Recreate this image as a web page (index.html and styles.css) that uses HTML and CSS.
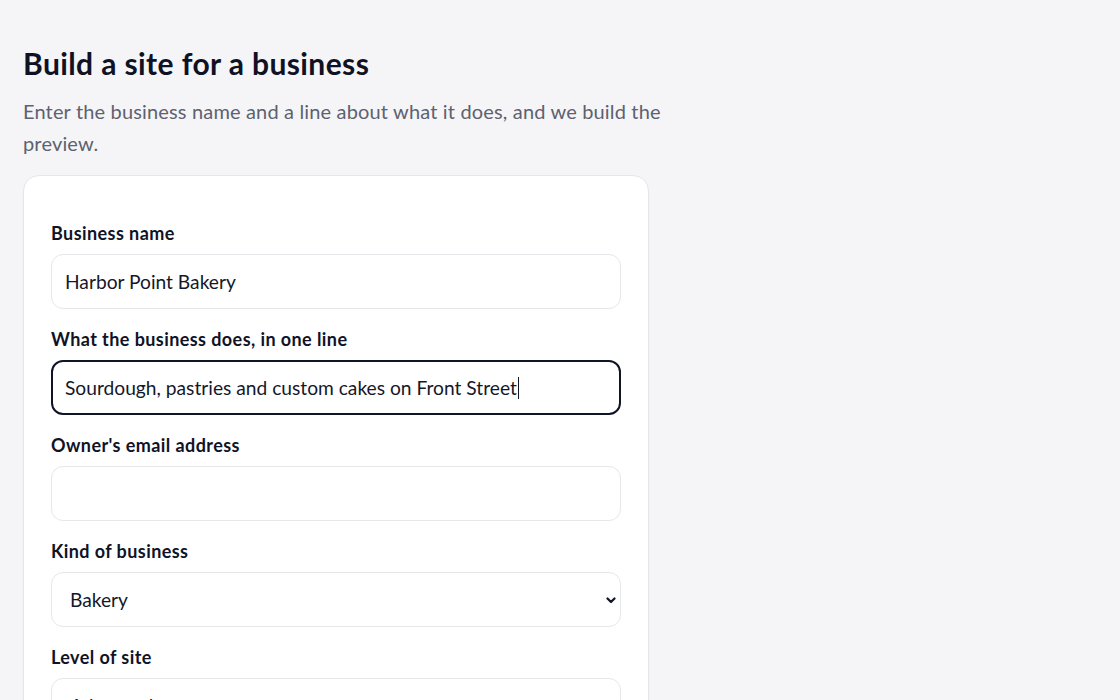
FILE: index.html
```html
<!DOCTYPE html>
<html lang="en">
<head>
<meta charset="utf-8">
<title>Build a site for a business</title>
<link rel="stylesheet" href="styles.css">
</head>
<body>
<main class="page">
  <h1 class="title">Build a site for a business</h1>
  <p class="intro">Enter the business name and a line about what it does, and we build the preview.</p>
  <form class="card">
    <div class="field">
      <label class="label" for="name">Business name</label>
      <input class="control" id="name" type="text" value="Harbor Point Bakery">
    </div>
    <div class="field">
      <label class="label" for="line">What the business does, in one line</label>
      <div class="control control--focus" id="line"><span>Sourdough, pastries and custom cakes on Front Street</span><span class="caret"></span></div>
    </div>
    <div class="field">
      <label class="label" for="email">Owner's email address</label>
      <input class="control" id="email" type="email" value="">
    </div>
    <div class="field">
      <label class="label" for="kind">Kind of business</label>
      <div class="select-wrap">
        <select class="control control--select" id="kind">
          <option selected>Bakery</option>
          <option>Café</option>
          <option>Restaurant</option>
          <option>Shop</option>
        </select>
        <svg class="chevron" viewBox="0 0 10 7" width="10" height="7" aria-hidden="true"><path d="M1.5 1.5 L5 5 L8.5 1.5" fill="none" stroke="#111426" stroke-width="2.2" stroke-linecap="round" stroke-linejoin="round"/></svg>
      </div>
    </div>
    <div class="field">
      <label class="label" for="level">Level of site</label>
      <div class="select-wrap">
        <select class="control control--select" id="level">
          <option selected>Advanced</option>
          <option>Basic</option>
        </select>
        <svg class="chevron" viewBox="0 0 10 7" width="10" height="7" aria-hidden="true"><path d="M1.5 1.5 L5 5 L8.5 1.5" fill="none" stroke="#111426" stroke-width="2.2" stroke-linecap="round" stroke-linejoin="round"/></svg>
      </div>
    </div>
  </form>
</main>
</body>
</html>
```

FILE: styles.css
```css
* { box-sizing: border-box; }

html, body {
  margin: 0;
  padding: 0;
  background: #f5f5f7;
}

body {
  font-family: "Lato", "Noto Sans", "Liberation Sans", sans-serif;
  color: #101326;
}

.page {
  max-width: 720px;
  padding: 45px 23px 40px;
}

.title {
  margin: 0 0 14px;
  font-size: 30px;
  line-height: 36px;
  font-weight: 700;
  letter-spacing: 0.4px;
  color: #0f1124;
}

.intro {
  margin: 0 0 16px;
  max-width: 666px;
  font-size: 20px;
  line-height: 32px;
  letter-spacing: 0.16px;
  color: #5d6170;
}

.card {
  width: 626px;
  background: #ffffff;
  border: 1px solid #e5e6ea;
  border-radius: 16px;
  padding: 44px 27px 40px;
  box-shadow: 0 1px 2px rgba(16, 19, 38, 0.03);
}

.field {
  display: flex;
  flex-direction: column;
  margin-bottom: 17px;
}

.label {
  font-size: 18px;
  line-height: 27px;
  font-weight: 700;
  letter-spacing: 0.42px;
  color: #101326;
  margin-bottom: 7px;
}

.control {
  display: flex;
  align-items: center;
  width: 100%;
  height: 55px;
  padding: 0 13px;
  border: 1px solid #e6e7eb;
  border-radius: 12px;
  background: #ffffff;
  font-family: inherit;
  font-size: 19.2px;
  color: #14172a;
  outline: none;
}

.control--focus {
  border: 2px solid #111426;
  padding: 0 12px;
}

.caret {
  display: inline-block;
  width: 1px;
  height: 22px;
  background: #111426;
  margin-left: 1px;
}

.select-wrap {
  position: relative;
}

.control--select {
  appearance: none;
  -webkit-appearance: none;
  padding: 0 36px 0 18px;
}

.chevron {
  position: absolute;
  right: 5px;
  top: 50%;
  margin-top: -3px;
  pointer-events: none;
}
```
